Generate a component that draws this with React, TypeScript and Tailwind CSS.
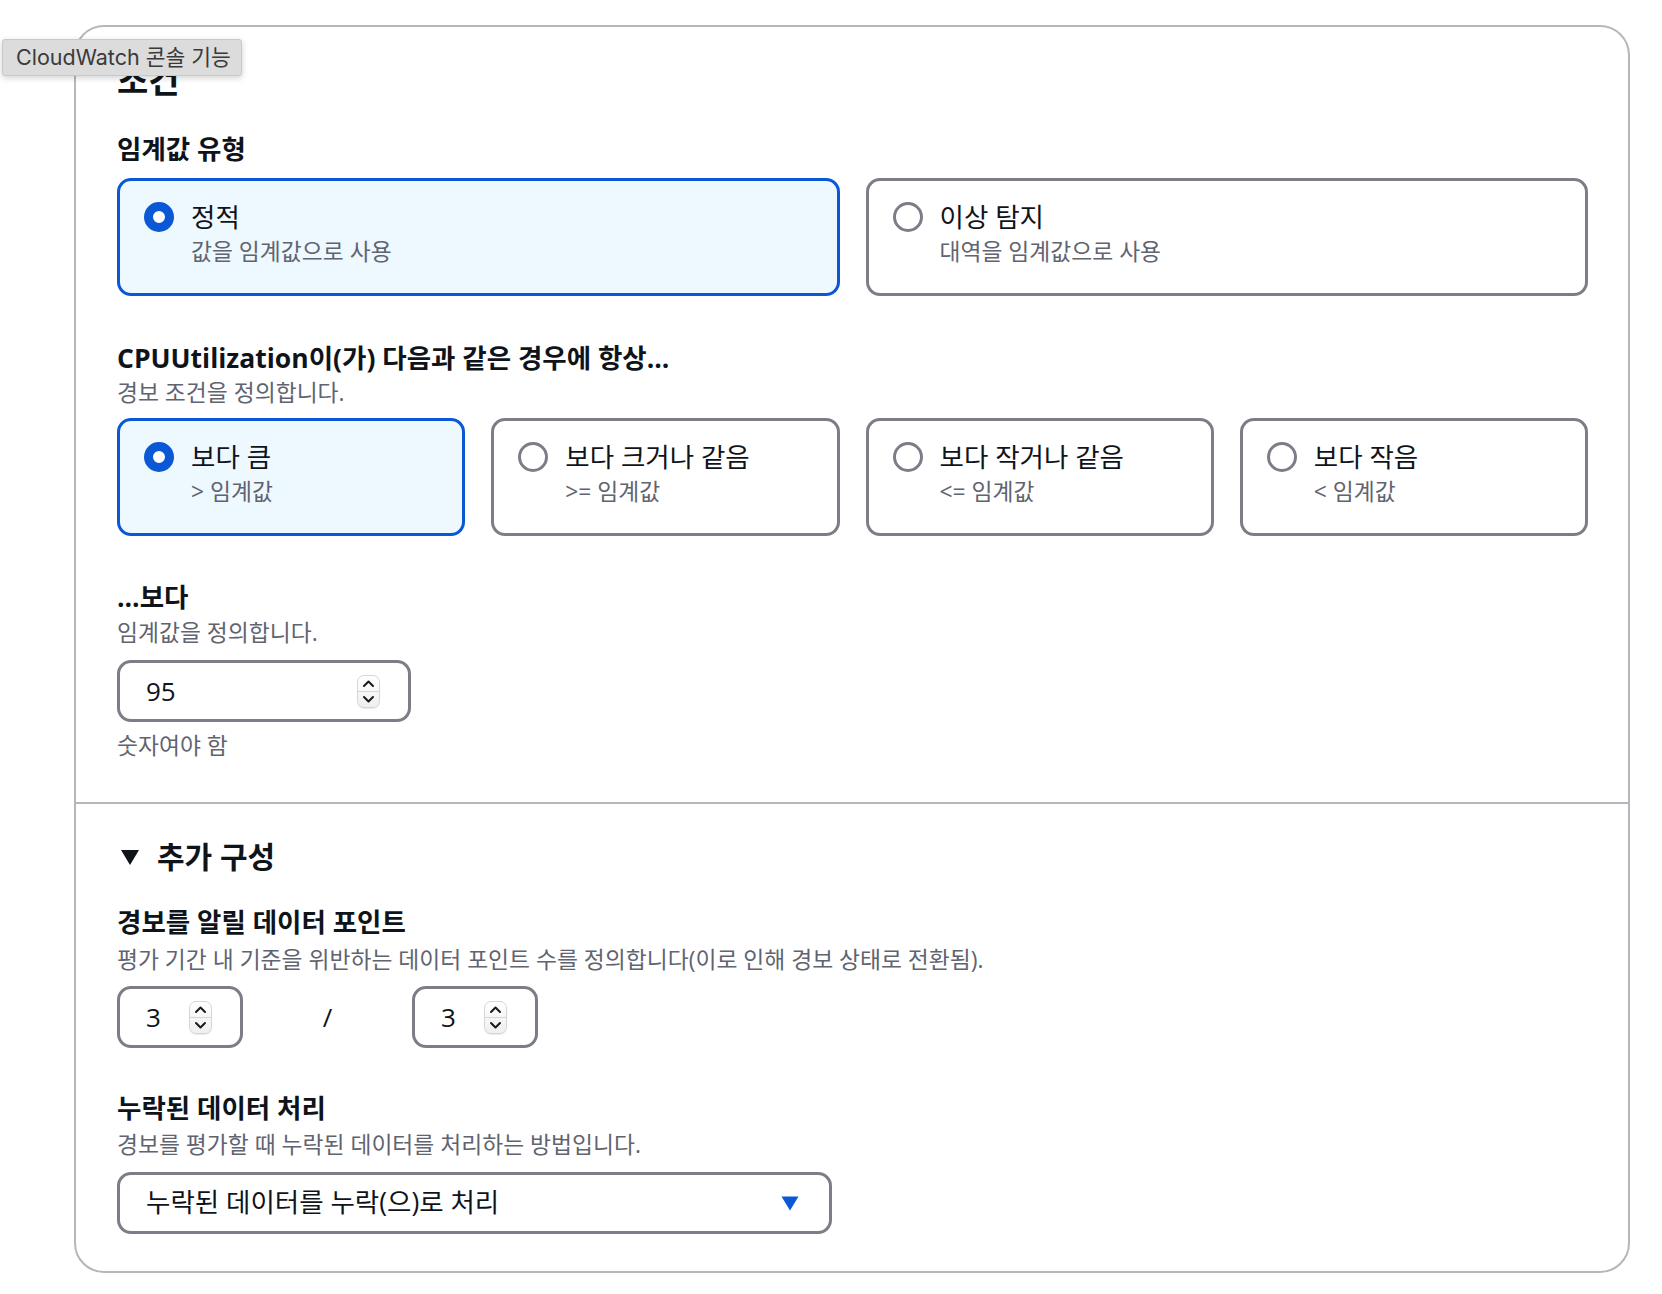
import React from "react";

const FONT = "font-['Open_Sans','Noto_Sans_CJK_KR',sans-serif]";

function Radio({ checked }: { checked: boolean }) {
  return checked ? (
    <span className="block h-[30px] w-[30px] shrink-0 rounded-full border-[9px] border-[#0a58d6] bg-white" />
  ) : (
    <span className="block h-[30px] w-[30px] shrink-0 rounded-full border-[3px] border-[#7d7d87] bg-white" />
  );
}

function Tile({
  label,
  description,
  checked,
}: {
  label: string;
  description: string;
  checked?: boolean;
}) {
  return (
    <div
      className={
        checked
          ? "h-[118px] rounded-[14px] border-[3px] border-[#0a58d6] bg-[#eef8ff] pl-[24px] pt-[21px]"
          : "h-[118px] rounded-[14px] border-[3px] border-[#7d7d87] bg-white pl-[24px] pt-[21px]"
      }
    >
      <div className="flex items-center gap-[17px]">
        <Radio checked={!!checked} />
        <span className="text-[26.5px] leading-[30px] text-[#0f141a]">{label}</span>
      </div>
      <div className="mt-[6px] pl-[47px] text-[22.8px] leading-[28px] text-[#5f6470]">
        {description}
      </div>
    </div>
  );
}

function Spinner() {
  return (
    <div className="flex h-[33px] w-[23px] shrink-0 flex-col items-center justify-center rounded-[7px] border border-[#d6d6d9] bg-gradient-to-b from-white to-[#efeff1] shadow-[0_1px_1px_rgba(0,0,0,0.08)]">
      <svg width="13" height="9" viewBox="0 0 13 9" fill="none">
        <path d="M2 7 L6.5 2.5 L11 7" stroke="#1a1a1a" strokeWidth="2" strokeLinecap="round" strokeLinejoin="round" />
      </svg>
      <div className="my-[3px] h-px w-full bg-[#d6d6d9]" />
      <svg width="13" height="9" viewBox="0 0 13 9" fill="none">
        <path d="M2 2 L6.5 6.5 L11 2" stroke="#1a1a1a" strokeWidth="2" strokeLinecap="round" strokeLinejoin="round" />
      </svg>
    </div>
  );
}

function NumberBox({ value, width }: { value: string; width: string }) {
  return (
    <div
      className={`flex h-[62px] items-center rounded-[14px] border-[3px] border-[#7d7d87] bg-white pl-[26px] pr-[28px] ${width}`}
    >
      <span className="flex-1 text-[26px] text-[#0f141a]">{value}</span>
      <Spinner />
    </div>
  );
}

function Label({ children }: { children: React.ReactNode }) {
  return <div className="text-[26.5px] font-bold leading-[32px] text-[#0f141a]">{children}</div>;
}

function Desc({ children, className = "" }: { children: React.ReactNode; className?: string }) {
  return <div className={`text-[22.8px] leading-[28px] text-[#5f6470] ${className}`}>{children}</div>;
}

export default function App() {
  return (
    <div className={`relative min-h-screen bg-white ${FONT}`}>
      <div className="w-[1630px] pl-[74px] pt-[25px]">
        <section className="rounded-[30px] border-2 border-[#b6b6bd] bg-white">
          <div className="pb-[42px] pl-[41px] pr-[40px] pt-[33px]">
            <h2 className="text-[34px] font-bold leading-[40px] text-[#0f141a]">조건</h2>

            <div className="mt-[33px]">
              <Label>임계값 유형</Label>
            </div>
            <div className="mt-[13px] grid grid-cols-2 gap-x-[26px]">
              <Tile label="정적" description="값을 임계값으로 사용" checked />
              <Tile label="이상 탐지" description="대역을 임계값으로 사용" />
            </div>

            <div className="mt-[46px]">
              <Label>CPUUtilization이(가) 다음과 같은 경우에 항상...</Label>
            </div>
            <Desc className="mt-[5px]">경보 조건을 정의합니다.</Desc>
            <div className="mt-[11px] grid grid-cols-4 gap-x-[26px]">
              <Tile label="보다 큼" description="> 임계값" checked />
              <Tile label="보다 크거나 같음" description=">= 임계값" />
              <Tile label="보다 작거나 같음" description="<= 임계값" />
              <Tile label="보다 작음" description="< 임계값" />
            </div>

            <div className="mt-[45px]">
              <Label>...보다</Label>
            </div>
            <Desc className="mt-[6px]">임계값을 정의합니다.</Desc>
            <div className="mt-[13px]">
              <NumberBox value="95" width="w-[294px]" />
            </div>
            <Desc className="mt-[10px]">숫자여야 함</Desc>
          </div>

          <div className="border-t-2 border-[#b6b6bd] pb-[37px] pl-[41px] pr-[40px] pt-[35px]">
            <div className="flex items-center gap-[17px] pl-[3px]">
              <svg width="20" height="17" viewBox="0 0 20 17">
                <path d="M1 1 H19 L10 16 Z" fill="#0f141a" />
              </svg>
              <span className="text-[30px] font-bold leading-[36px] text-[#0f141a]">추가 구성</span>
            </div>

            <div className="mt-[31px]">
              <Label>경보를 알릴 데이터 포인트</Label>
            </div>
            <Desc className="mt-[8px]">
              평가 기간 내 기준을 위반하는 데이터 포인트 수를 정의합니다(이로 인해 경보 상태로 전환됨).
            </Desc>
            <div className="mt-[12px] flex items-center">
              <NumberBox value="3" width="w-[126px]" />
              <span className="w-[169px] text-center text-[26px] text-[#0f141a]">/</span>
              <NumberBox value="3" width="w-[126px]" />
            </div>

            <div className="mt-[44px]">
              <Label>누락된 데이터 처리</Label>
            </div>
            <Desc className="mt-[7px]">경보를 평가할 때 누락된 데이터를 처리하는 방법입니다.</Desc>
            <div className="mt-[13px] flex h-[62px] w-[715px] items-center rounded-[14px] border-[3px] border-[#7d7d87] bg-white pl-[26px] pr-[30px]">
              <span className="flex-1 text-[26.5px] text-[#0f141a]">누락된 데이터를 누락(으)로 처리</span>
              <svg width="18" height="15" viewBox="0 0 18 15">
                <path d="M0.5 0.5 H17.5 L9 14.5 Z" fill="#0a58d6" />
              </svg>
            </div>
          </div>
        </section>
      </div>

      <div className="absolute left-[2px] top-[39px] z-10 flex h-[37px] w-[240px] items-center rounded-[3px] border border-[#c9c9c9] bg-[#dcdcdc] pl-[13px] font-['Inter','Noto_Sans_CJK_KR',sans-serif] text-[21.5px] text-[#3a3a3a] shadow-[0_2px_6px_rgba(0,0,0,0.18)]">
        CloudWatch 콘솔 기능
      </div>
    </div>
  );
}
